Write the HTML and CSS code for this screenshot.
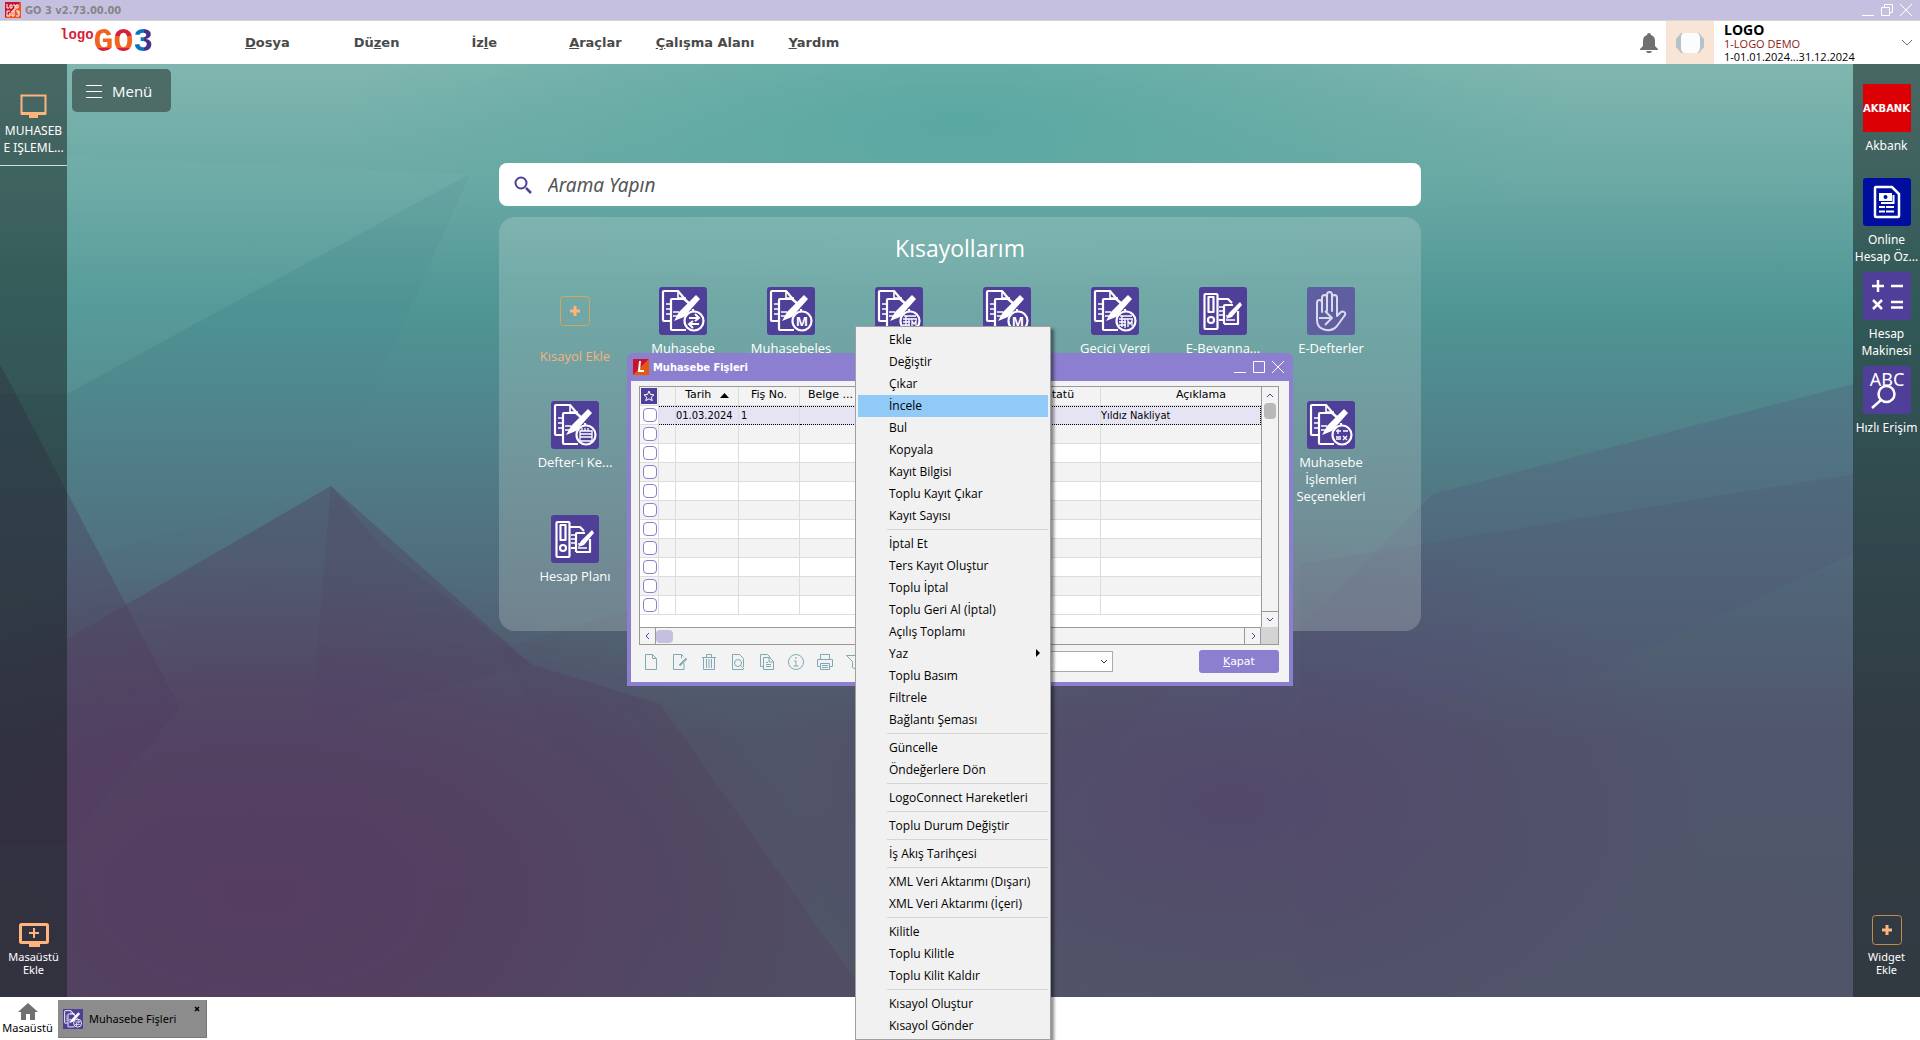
FILE: index.html
```
<!DOCTYPE html>
<html lang="tr">
	<head>
		<meta charset="UTF-8">
		<title>GO 3 v2.73.00.00</title>
		<link rel="stylesheet" href="styles.css">
	</head>
	<body>
		<!--ikonlar-->
		<svg class="sprite" aria-hidden="true">
			<symbol id="i-docs" viewBox="0 0 48 48">
				<g fill="none" stroke="#fff" stroke-width="2.200" stroke-linejoin="round">
					<path d="M11 34H5a1 1 0 0 1-1-1V5a1 1 0 0 1 1-1h14l6 7"/>
					<path d="M19 4v7h8M7 17h4M7 22h4M7 27h4M14 25h6M14 29h5" stroke-width="1.600"/>
					<path d="M27 43H13a1 1 0 0 1-1-1V13a1 1 0 0 1 1-1h14M34 22v4"/>
				</g>
				<path d="M37 8l4 4-16 18-10 4 5-9z" fill="#fff"/>
				<path d="M24 11l8 7" stroke="#fff" stroke-width="2.500"/>
				<circle cx="35" cy="34" r="9.500" fill="#4f3f99" stroke="#fff" stroke-width="2.200"/>
			</symbol>
			<symbol id="i-binder" viewBox="0 0 48 48">
				<g fill="none" stroke="#fff" stroke-width="2.200" stroke-linejoin="round">
					<rect x="5.500" y="7" width="13" height="35" rx="1"/>
					<rect x="9.500" y="10" width="5" height="15"/>
					<circle cx="12" cy="33" r="3"/>
					<path d="M19 12h10l4 4M20 33h4M25 37V19a1 1 0 0 1 1-1h8M39 24v13H25"/>
					<path d="M20 20h4M20 24h4M20 28h4M27 29h5M27 33h9" stroke-width="1.500"/>
				</g>
				<path d="M41 15l2 3-10 12-6 2 3-6z" fill="#fff"/>
			</symbol>
			<symbol id="i-swap" viewBox="0 0 48 48">
				<path d="M30 31h9m-3-4l4 4-4 3M40 37h-9m3-3l-4 3 4 4" fill="none" stroke="#fff" stroke-width="2"/>
			</symbol>
			<symbol id="i-form" viewBox="0 0 48 48">
				<path d="M29 29h12M28 32h14M28 35h7M28 38h7M31 29v11M34 32v9M37 40v-6l2 3 2-3v5" fill="none" stroke="#fff" stroke-width="1.300"/>
			</symbol>
			<symbol id="i-cal" viewBox="0 0 48 48">
				<path d="M29 30h12v10H29zM29 33h12M29 36h12M31 27v3M34 27v3M37 27v3" fill="none" stroke="#fff" stroke-width="1.300"/>
			</symbol>
			<symbol id="i-calc" viewBox="0 0 48 48">
				<path d="M29 30h5M31 28v5M36 30h5M29 36h5M29 38h5M36 35l4 4M40 35l-4 4" fill="none" stroke="#fff" stroke-width="1.300"/>
			</symbol>
			<symbol id="i-monitor" viewBox="0 0 32 28">
				<rect x="3.500" y="3.500" width="24" height="18" fill="none" stroke="#ffb47c" stroke-width="2"/>
				<path d="M3 20h25v3h-8v3h-9v-3H3z" fill="#ffb47c"/>
			</symbol>
		</svg>

		<div class="titlebar">
			<svg class="app-icon" viewBox="0 0 16 16">
				<path d="M0 0h16L0 16z" fill="#c8152c"/><path d="M16 0v16H0z" fill="#f4511e"/>
				<path d="M2 2v4h2M5 3h2v3H5zM8 3h2v5H8M11 3h2v3h-2zM5 9H2v5h3v-3M7 9h2v5H7zM11 9h3v5h-3M12 11h2" fill="none" stroke="#fff"/>
			</svg>
			<span class="app-title">GO 3 v2.73.00.00</span>
			<div class="win-btns">
				<button type="button" aria-label="Simge durumuna küçült"><svg viewBox="0 0 14 14"><path d="M1 12.500h12"/></svg></button>
				<button type="button" aria-label="Önceki boyut"><svg viewBox="0 0 14 14"><path d="M1.500 4.500h8v8h-8zM4.500 4.500v-3h8v8h-3"/></svg></button>
				<button type="button" aria-label="Kapat"><svg viewBox="0 0 14 14"><path d="M1 1l12 12M13 1L1 13"/></svg></button>
			</div>
		</div>

		<header class="header">
			<div class="logo">
				<span class="logo-small">logo</span><span class="logo-g">G</span><span class="logo-o">O</span><span class="logo-3">3</span>
			</div>
			<nav class="main-menu">
				<a href="#"><u>D</u>osya</a>
				<a href="#">Dü<u>z</u>en</a>
				<a href="#">İz<u>l</u>e</a>
				<a href="#"><u>A</u>raçlar</a>
				<a href="#"><u>Ç</u>alışma Alanı</a>
				<a href="#"><u>Y</u>ardım</a>
			</nav>
			<button type="button" class="bell" aria-label="Bildirimler">
				<svg viewBox="0 0 18 20"><path d="M9 0a2 2 0 0 1 2 2c3 1 4 3 4 6v5l3 3v1H0v-1l3-3V8c0-3 1-5 4-6a2 2 0 0 1 2-2zM6 18h6c-1 3-5 3-6 0z" fill="#707070"/></svg>
			</button>
			<div class="avatar">
				<svg viewBox="0 0 28 20"><path d="M5 0h18l5 6v8l-5 6H5l-5-6V6z" fill="#b5c2c8"/><path d="M7 0h14q3 1 3 5v10q-1 5-4 5H9q-4 0-4-5V5q0-4 2-5z" fill="#fbfcfc"/></svg>
			</div>
			<div class="account">
				<strong>LOGO</strong>
				<span class="firm">1-LOGO DEMO</span>
				<span>1-01.01.2024...31.12.2024</span>
			</div>
			<button type="button" class="account-more" aria-label="Hesap">
				<svg viewBox="0 0 12 8"><path d="M1 1l5 5 5-5" fill="none" stroke="#707070"/></svg>
			</button>
		</header>

		<div class="desktop">
			<svg class="wallpaper" viewBox="0 0 1920 933" preserveAspectRatio="none" aria-hidden="true">
				<defs>
					<linearGradient id="base" x1="0" y1="0" x2="0" y2="1">
						<stop offset="0" stop-color="#80b6af"/>
						<stop offset=".12" stop-color="#6caaa5"/>
						<stop offset=".26" stop-color="#4f9695"/>
						<stop offset=".4" stop-color="#518189"/>
						<stop offset=".55" stop-color="#506c7b"/>
						<stop offset=".72" stop-color="#50586c"/>
						<stop offset="1" stop-color="#505768"/>
					</linearGradient>
					<radialGradient id="plum"><stop offset="0" stop-color="#56375f"/><stop offset=".5" stop-color="#56375f" stop-opacity=".7"/><stop offset="1" stop-color="#56375f" stop-opacity="0"/></radialGradient>
					<radialGradient id="violet"><stop offset="0" stop-color="#54446a"/><stop offset="1" stop-color="#54446a" stop-opacity="0"/></radialGradient>
					<radialGradient id="teal"><stop offset="0" stop-color="#5aa8a2"/><stop offset="1" stop-color="#5aa8a2" stop-opacity="0"/></radialGradient>
				</defs>
				<rect width="1920" height="933" fill="url(#base)"/>
				<ellipse cx="960" cy="60" rx="620" ry="170" fill="url(#teal)"/>
				<path d="M0 90L470 110 67 330H0z" fill="#7fbab3" opacity=".15"/>
				<path d="M470 110L330 422 67 500V330z" fill="#4c8488" opacity=".12"/>
				<path d="M0 300l180 344L67 780H0z" fill="#4c3f60" opacity=".4"/>
				<path d="M331 422L67 575v358h800L660 640 530 600z" fill="#4f4462" opacity=".45"/>
				<path d="M331 422l50 60 150 118-220 60z" fill="#4e4b66" opacity=".35"/>
				<path d="M500 585l400-120 300 130-330 338H700z" fill="#50475f" opacity=".15"/>
				<path d="M1853 320l-420 110-240 240 400-60 260-120z" fill="#54597a" opacity=".3"/>
				<path d="M1300 500l553-90v523h-553z" fill="#525070" opacity=".2"/>
				<ellipse cx="260" cy="830" rx="560" ry="330" fill="url(#plum)" opacity=".75"/>
				<ellipse cx="1230" cy="740" rx="480" ry="280" fill="url(#violet)" opacity=".75"/>
			</svg>

			<aside class="side side-left">
				<button type="button" class="side-item side-current">
					<svg class="i-monitor"><use href="#i-monitor"/></svg>
					<span>MUHASEB<br>E IŞLEML...</span>
				</button>
				<button type="button" class="side-item side-add">
					<svg class="i-monitor i-monitor-add" viewBox="0 0 32 26"><rect x="2.500" y="2.500" width="27" height="18" rx="1" fill="none" stroke="#ffb47c" stroke-width="3"/><path d="M11 21h11v4H11zM15 6h2v4h4v2h-4v4h-2v-4h-4v-2h4z" fill="#ffb47c"/></svg>
					<span>Masaüstü<br>Ekle</span>
				</button>
			</aside>

			<main class="stage">
				<button type="button" class="menu-btn">
					<svg viewBox="0 0 16 14"><path d="M0 1.500h16M0 7.500h16M0 13.500h16" stroke="#fff"/></svg>
					Menü
				</button>

				<label class="search">
					<svg viewBox="0 0 18 18"><path d="M12 12l5 5" stroke="#4f3f99" stroke-width="2.500"/><circle cx="7" cy="7" r="5.500" fill="none" stroke="#4f3f99" stroke-width="2"/></svg>
					<input type="text" placeholder="Arama Yapın" aria-label="Arama Yapın">
				</label>

				<section class="shortcuts">
					<h1>Kısayollarım</h1>
					<div class="grid">
						<a href="#" class="cell add">
							<svg viewBox="0 0 30 30"><rect x=".5" y=".5" width="29" height="29" rx="3" fill="none" stroke="#d3a55e"/><path d="M13.500 10h3v3.500H20v3h-3.500V20h-3v-3.500H10v-3h3.500z" fill="#ffb47c"/></svg>
							<span>Kısayol Ekle</span>
						</a>
						<a href="#" class="cell"><svg class="tile"><use href="#i-docs"/><use href="#i-swap"/></svg><span>Muhasebe</span></a>
						<a href="#" class="cell"><svg class="tile"><use href="#i-docs"/><text x="35" y="39" class="badge-m">M</text></svg><span>Muhasebeles</span></a>
						<a href="#" class="cell" aria-label="Kısayol"><svg class="tile"><use href="#i-docs"/><use href="#i-form"/></svg></a>
						<a href="#" class="cell" aria-label="Kısayol"><svg class="tile"><use href="#i-docs"/><text x="35" y="39" class="badge-m">M</text></svg></a>
						<a href="#" class="cell"><svg class="tile"><use href="#i-docs"/><use href="#i-form"/></svg><span>Geçici Vergi</span></a>
						<a href="#" class="cell"><svg class="tile"><use href="#i-binder"/></svg><span>E-Beyanna...</span></a>
						<a href="#" class="cell">
							<svg class="tile dim" viewBox="0 0 48 48"><path d="M10 33V16c0-4 5-4 5 0v9V11c0-4 5-4 5 0v13V8c0-4 5-4 5 0v16V11c0-4 5-4 5 0v18l4-4c2-1 5 0 4 3l-8 11c-6 7-20 5-20-6zM12 31h12M18 24l7 7-7 7" fill="none" stroke="#dcd9ee" stroke-width="2" stroke-linejoin="round"/></svg>
							<span>E-Defterler</span>
						</a>
						<a href="#" class="cell"><svg class="tile"><use href="#i-docs"/><use href="#i-cal"/></svg><span>Defter-i Ke...</span></a>
						<a href="#" class="cell last-col"><svg class="tile"><use href="#i-docs"/><use href="#i-calc"/></svg><span>Muhasebe<br>İşlemleri<br>Seçenekleri</span></a>
						<a href="#" class="cell"><svg class="tile"><use href="#i-binder"/></svg><span>Hesap Planı</span></a>
					</div>
				</section>
			</main>

			<aside class="side side-right">
				<button type="button" class="side-item">
					<span class="tile akbank"><b>AKBANK</b></span>
					<span>Akbank</span>
				</button>
				<button type="button" class="side-item">
					<svg class="tile tile-blue" viewBox="0 0 48 48"><path d="M13 9h16l7 7v22a1 1 0 0 1-1 1H13a1 1 0 0 1-1-1V10a1 1 0 0 1 1-1z" fill="none" stroke="#fff" stroke-width="2.500"/><path d="M16 15h13v8H16z" fill="#fff"/><circle cx="22.500" cy="19" r="2" fill="#000ea0"/><path d="M30.500 17v8H18M16 29h6M16 33.500h6M23 29h8M23 33.500h8" fill="none" stroke="#fff" stroke-width="2"/></svg>
					<span>Online<br>Hesap Öz...</span>
				</button>
				<button type="button" class="side-item">
					<svg class="tile" viewBox="0 0 48 48"><path d="M9 14h12M15 8v12M28 14h12M10 28l9 9M19 28l-9 9M28 30h12M28 35.500h12" stroke="#fff" stroke-width="2.500"/></svg>
					<span>Hesap<br>Makinesi</span>
				</button>
				<button type="button" class="side-item">
					<svg class="tile" viewBox="0 0 48 48"><text x="24" y="20" class="abc">ABC</text><circle cx="23.500" cy="28" r="8" fill="none" stroke="#fff" stroke-width="2.500"/><path d="M18 34l-9 8" stroke="#fff" stroke-width="2.500"/></svg>
					<span>Hızlı Erişim</span>
				</button>
				<button type="button" class="side-item side-add">
					<svg class="box-add" viewBox="0 0 30 30"><rect x=".5" y=".5" width="29" height="29" rx="3" fill="none" stroke="#c08e48"/><path d="M13.500 10h3v3.500H20v3h-3.500V20h-3v-3.500H10v-3h3.500z" fill="#ffb47c"/></svg>
					<span>Widget<br>Ekle</span>
				</button>
			</aside>
		</div>

		<footer class="taskbar">
			<a href="#" class="home">
				<svg viewBox="0 0 20 17"><path d="M10 0l10 9h-3v8h-5v-6H8v6H3V9H0z" fill="#707070"/></svg>
				Masaüstü
			</a>
			<div class="task">
				<svg class="tile"><use href="#i-docs"/><use href="#i-swap"/></svg>
				<span>Muhasebe Fişleri</span>
				<button type="button" aria-label="Sekmeyi kapat"><svg viewBox="0 0 6 6"><path d="M1 1l4 4M5 1L1 5" stroke="#000" stroke-width="1.500"/></svg></button>
			</div>
		</footer>

		<!--Muhasebe Fişleri penceresi-->
		<div class="window">
			<div class="window-head">
				<svg class="app-icon" viewBox="0 0 16 16"><path d="M0 0h16L0 16z" fill="#c8152c"/><path d="M16 0v16H0z" fill="#e8570f"/><path d="M7 2L6 12h5" fill="none" stroke="#fff" stroke-width="2"/></svg>
				<h2>Muhasebe Fişleri</h2>
				<div class="win-btns">
					<button type="button" aria-label="Simge durumuna küçült"><svg viewBox="0 0 14 14"><path d="M1 12.500h12"/></svg></button>
					<button type="button" aria-label="Ekranı kapla"><svg viewBox="0 0 14 14"><path d="M1.500 1.500h11v11h-11z"/></svg></button>
					<button type="button" aria-label="Kapat"><svg viewBox="0 0 14 14"><path d="M1 1l12 12M13 1L1 13"/></svg></button>
				</div>
			</div>
			<div class="window-body">
				<div class="list">
					<div class="list-main">
						<table>
							<colgroup><col class="c-check"><col class="c-mark"><col class="c-date"><col class="c-no"><col class="c-doc"><col><col class="c-state"><col class="c-desc"></colgroup>
							<thead>
								<tr>
									<th><svg class="star" viewBox="0 0 16 16"><path d="M8 3l1.500 3.500 3.500.3-2.700 2.300.9 3.600L8 10.800l-3.200 1.900.9-3.600L3 6.800l3.500-.3z" fill="none" stroke="#fff"/></svg></th>
									<th></th>
									<th>Tarih <svg class="sort" viewBox="0 0 9 5"><path d="M0 5L4.500 0 9 5z"/></svg></th>
									<th>Fiş No.</th>
									<th>Belge ...</th>
									<th></th>
									<th>Statü</th>
									<th>Açıklama</th>
								</tr>
							</thead>
							<tbody>
								<tr class="selected"><td><input type="checkbox" aria-label="Satır 1"></td><td></td><td>01.03.2024</td><td>1</td><td></td><td></td><td></td><td>Yıldız Nakliyat</td></tr>
								<tr><td><input type="checkbox" aria-label="Satır 2"></td><td></td><td></td><td></td><td></td><td></td><td></td><td></td></tr>
								<tr><td><input type="checkbox" aria-label="Satır 3"></td><td></td><td></td><td></td><td></td><td></td><td></td><td></td></tr>
								<tr><td><input type="checkbox" aria-label="Satır 4"></td><td></td><td></td><td></td><td></td><td></td><td></td><td></td></tr>
								<tr><td><input type="checkbox" aria-label="Satır 5"></td><td></td><td></td><td></td><td></td><td></td><td></td><td></td></tr>
								<tr><td><input type="checkbox" aria-label="Satır 6"></td><td></td><td></td><td></td><td></td><td></td><td></td><td></td></tr>
								<tr><td><input type="checkbox" aria-label="Satır 7"></td><td></td><td></td><td></td><td></td><td></td><td></td><td></td></tr>
								<tr><td><input type="checkbox" aria-label="Satır 8"></td><td></td><td></td><td></td><td></td><td></td><td></td><td></td></tr>
								<tr><td><input type="checkbox" aria-label="Satır 9"></td><td></td><td></td><td></td><td></td><td></td><td></td><td></td></tr>
								<tr><td><input type="checkbox" aria-label="Satır 10"></td><td></td><td></td><td></td><td></td><td></td><td></td><td></td></tr>
								<tr><td><input type="checkbox" aria-label="Satır 11"></td><td></td><td></td><td></td><td></td><td></td><td></td><td></td></tr>
							</tbody>
						</table>
					</div>
					<div class="scroll-v">
						<button type="button" aria-label="Yukarı"><svg viewBox="0 0 8 8"><path d="M1 6l3-3 3 3"/></svg></button>
						<span class="thumb"></span>
						<button type="button" aria-label="Aşağı"><svg viewBox="0 0 8 8"><path d="M1 2l3 3 3-3"/></svg></button>
					</div>
					<div class="scroll-h">
						<button type="button" aria-label="Sola"><svg viewBox="0 0 8 8"><path d="M5 1L2 4l3 3"/></svg></button>
						<span class="thumb"></span>
						<button type="button" aria-label="Sağa"><svg viewBox="0 0 8 8"><path d="M3 1l3 3-3 3"/></svg></button>
					</div>
				</div>
				<div class="tools">
					<button type="button" aria-label="Ekle"><svg viewBox="0 0 16 16"><path d="M2.500.5h7l4 4v11h-11zM9.500.5v4h4"/></svg></button>
					<button type="button" aria-label="Değiştir"><svg viewBox="0 0 16 16"><path d="M12 9v6.500H1.500V.5h8l2 2M9.500.5v4"/><path d="M14.500 4.500l-7 7" stroke-width="2"/></svg></button>
					<button type="button" aria-label="Çıkar"><svg viewBox="0 0 16 16"><path d="M1 3.500h14M5.500 3V.5h5V3M2.500 4v11.500h11V4M5.500 5v9M8 5v9M10.500 5v9"/></svg></button>
					<button type="button" aria-label="İncele"><svg viewBox="0 0 16 16"><path d="M13.500 13V4.500l-4-4h-7v15h11M10 11l4 4"/><circle cx="8" cy="9" r="3.500"/></svg></button>
					<button type="button" aria-label="Kopyala"><svg viewBox="0 0 16 16"><path d="M4 12.500H1.500V.5h7l3 3M4.500 3.500h6l4 4v8h-10zM10 4v4h4M7 8.500h2M7 10.500h5M7 12.500h5"/></svg></button>
					<button type="button" aria-label="Kayıt Bilgisi"><svg viewBox="0 0 16 16"><circle cx="8" cy="8" r="7.500"/><path d="M8 3v2M6 7h2v5M5.500 12h5"/></svg></button>
					<button type="button" aria-label="Yaz"><svg viewBox="0 0 16 16"><path d="M3.500 5V.5h9V5M3 12.500H.5v-7h15v7H13M3.500 9.500h9v6h-9zM5 11.500h6M5 13.500h6"/></svg></button>
					<button type="button" aria-label="Filtrele"><svg viewBox="0 0 16 16"><path d="M.5 1.500h15l-5 6v8l-4-2v-6z"/></svg></button>
					<span class="combo">
						<select aria-label="Görünüm"><option></option></select>
						<svg viewBox="0 0 8 8"><path d="M1 2l3 3 3-3"/></svg>
					</span>
					<button type="button" class="close-btn"><u>K</u>apat</button>
				</div>
			</div>
		</div>

		<!--sağ tık menüsü-->
		<ul class="context-menu">
			<li><button type="button">Ekle</button></li>
			<li><button type="button">Değiştir</button></li>
			<li><button type="button">Çıkar</button></li>
			<li class="active"><button type="button">İncele</button></li>
			<li><button type="button">Bul</button></li>
			<li><button type="button">Kopyala</button></li>
			<li><button type="button">Kayıt Bilgisi</button></li>
			<li><button type="button">Toplu Kayıt Çıkar</button></li>
			<li><button type="button">Kayıt Sayısı</button></li>
			<li class="sep"></li>
			<li><button type="button">İptal Et</button></li>
			<li><button type="button">Ters Kayıt Oluştur</button></li>
			<li><button type="button">Toplu İptal</button></li>
			<li><button type="button">Toplu Geri Al (İptal)</button></li>
			<li><button type="button">Açılış Toplamı</button></li>
			<li><button type="button">Yaz <svg viewBox="0 0 4 8"><path d="M0 0l4 4-4 4z"/></svg></button></li>
			<li><button type="button">Toplu Basım</button></li>
			<li><button type="button">Filtrele</button></li>
			<li><button type="button">Bağlantı Şeması</button></li>
			<li class="sep"></li>
			<li><button type="button">Güncelle</button></li>
			<li><button type="button">Öndeğerlere Dön</button></li>
			<li class="sep"></li>
			<li><button type="button">LogoConnect Hareketleri</button></li>
			<li class="sep"></li>
			<li><button type="button">Toplu Durum Değiştir</button></li>
			<li class="sep"></li>
			<li><button type="button">İş Akış Tarihçesi</button></li>
			<li class="sep"></li>
			<li><button type="button">XML Veri Aktarımı (Dışarı)</button></li>
			<li><button type="button">XML Veri Aktarımı (İçeri)</button></li>
			<li class="sep"></li>
			<li><button type="button">Kilitle</button></li>
			<li><button type="button">Toplu Kilitle</button></li>
			<li><button type="button">Toplu Kilit Kaldır</button></li>
			<li class="sep"></li>
			<li><button type="button">Kısayol Oluştur</button></li>
			<li><button type="button">Kısayol Gönder</button></li>
		</ul>
	</body>
</html>
```
FILE: styles.css
```
*{
	padding: 0;
	margin: 0;
	box-sizing: border-box;
}
body{
	display: flex;
	flex-direction: column;
	height: 100vh;
	overflow: hidden;
	position: relative;
	background-color: #fff;
	font-family: "Open Sans", "Noto Sans", sans-serif;
	font-size: 12px;
}
a{
	color: inherit;
	text-decoration: none;
}
ul{
	list-style: none;
}
svg{
	display: block;
}
button{
	border: none;
	background: none;
	color: inherit;
	font: inherit;
}
.sprite{
	position: absolute;
	width: 0;
	height: 0;
}

/* başlık çubuğu */
.titlebar{
	display: flex;
	align-items: center;
	height: 21px;
	flex: none;
	padding: 0 7px 0 5px;
	border-bottom: 1px solid #d9d6d2;
	background-color: #c5c0df;
}
.app-icon{
	width: 16px;
	height: 16px;
}
.app-title{
	margin-left: 4px;
	color: #858585;
	font: bold 11px "DejaVu Sans Condensed", "DejaVu Sans", sans-serif;
}
.win-btns{
	display: flex;
	gap: 5px;
	margin-left: auto;
}
.win-btns svg{
	width: 14px;
	height: 14px;
	fill: none;
	stroke: #fff;
}

/* üst menü */
.header{
	display: flex;
	align-items: center;
	height: 43px;
	flex: none;
	padding-right: 7px;
}
.logo{
	display: flex;
	width: 245px;
	padding-left: 60px;
	font: bold 33px/36px "Liberation Mono", monospace;
}
.logo span{
	color: transparent;
	-webkit-background-clip: text;
	background-clip: text;
}
.logo .logo-small{
	color: #d61f3c;
	font-size: 14px;
	line-height: 20px;
}
.logo-g{
	background-image: linear-gradient(#f26322 65%, #d61f3c 65%);
}
.logo-o{
	background-image: linear-gradient(#d61f3c 30%, #f26322 30%, #f26322 65%, #d61f3c 65%);
}
.logo-3{
	background-image: linear-gradient(90deg, #0e72b8 55%, #46308c 55%);
}
.main-menu{
	display: flex;
	flex: 1;
	color: #4a4a4a;
	font: bold 13px "DejaVu Sans", sans-serif;
}
.main-menu a{
	margin-right: 34px;
}
.main-menu a:first-child{
	margin-right: 64px;
}
.main-menu a:nth-child(2),
.main-menu a:nth-child(3){
	margin-right: 72px;
}
.bell svg{
	width: 18px;
	height: 20px;
}
.avatar{
	display: flex;
	align-items: center;
	justify-content: center;
	width: 48px;
	height: 43px;
	margin: 0 10px 0 8px;
	background-color: #f8e5d6;
}
.avatar svg{
	width: 28px;
	height: 20px;
}
.account{
	display: flex;
	flex-direction: column;
	width: 177px;
	font-size: 11px;
	line-height: 13px;
}
.account strong{
	font-size: 14px;
	line-height: 15px;
}
.account .firm{
	color: #8b1a10;
}
.account-more svg{
	width: 12px;
	height: 8px;
}

/* masaüstü */
.desktop{
	display: flex;
	flex: 1;
	position: relative;
	min-height: 0;
	color: #fff;
}
.wallpaper{
	position: absolute;
	width: 100%;
	height: 100%;
}
.side{
	display: flex;
	flex-direction: column;
	position: relative;
	width: 67px;
	flex: none;
	padding-bottom: 21px;
	background-color: rgba(22,32,30,0.52);
	font-family: "Noto Sans", "Open Sans", sans-serif;
}
.side-item{
	display: flex;
	flex-direction: column;
	align-items: center;
	line-height: 17px;
	white-space: nowrap;
}
.side-current{
	height: 102px;
	padding-top: 28px;
	border-bottom: 1px solid #d5dcdb;
}
.i-monitor{
	width: 32px;
	height: 28px;
	margin-bottom: 2px;
}
.i-monitor-add{
	height: 26px;
}
.side-add{
	margin-top: auto;
	font-size: 11px;
	line-height: 13px;
}
.side-right{
	padding-top: 20px;
}
.side-right .side-item{
	height: 94px;
	gap: 5px;
}
.side-right .side-add{
	height: auto;
}
.box-add{
	width: 30px;
	height: 30px;
}
.tile{
	width: 48px;
	height: 48px;
	flex: none;
	border-radius: 3px;
	background-color: #4f3f99;
}
.tile-blue{
	background-color: #000ea0;
}
.akbank{
	display: flex;
	align-items: center;
	justify-content: center;
	border-radius: 0;
	background-color: #dc0005;
	font: bold 10px "DejaVu Sans", sans-serif;
}
.dim{
	background-color: #5e5ea0;
}
.badge-m{
	fill: #fff;
	font: bold 13px "Noto Sans", sans-serif;
	text-anchor: middle;
}
.abc{
	fill: #fff;
	font: 18px "Noto Sans", sans-serif;
	text-anchor: middle;
}
.stage{
	display: flex;
	flex-direction: column;
	flex: 1;
	align-items: center;
	position: relative;
	padding-top: 5px;
}
.menu-btn{
	display: flex;
	align-items: center;
	align-self: flex-start;
	gap: 10px;
	height: 43px;
	margin-left: 5px;
	padding: 0 19px 0 14px;
	border-radius: 5px;
	background-color: #4d6c68;
	font-size: 15px;
}
.menu-btn svg{
	width: 16px;
	height: 14px;
}
.search{
	display: flex;
	align-items: center;
	gap: 16px;
	width: 922px;
	max-width: 90%;
	height: 43px;
	margin-top: 51px;
	padding: 0 15px;
	border-radius: 8px;
	background-color: #fff;
}
.search svg{
	width: 18px;
	height: 18px;
}
.search input{
	flex: 1;
	border: none;
	outline: none;
	background: none;
	font: italic 19px "Noto Sans", sans-serif;
}
.search input::placeholder{
	color: #555;
}
.shortcuts{
	width: 922px;
	max-width: 90%;
	height: 414px;
	margin-top: 11px;
	padding: 14px 22px 0;
	border-radius: 16px;
	background-color: rgba(210,225,220,0.25);
}
.shortcuts h1{
	margin-bottom: 22px;
	font-size: 23px;
	font-weight: normal;
	line-height: 34px;
	text-align: center;
}
.grid{
	display: grid;
	grid-template-columns: repeat(8, 108px);
	grid-auto-rows: 114px;
}
.cell{
	display: flex;
	flex-direction: column;
	align-items: center;
	gap: 5px;
	font-size: 13px;
	line-height: 17px;
	text-align: center;
}
.add{
	gap: 22px;
	padding-top: 9px;
	color: #f3b380;
}
.add svg{
	width: 30px;
	height: 30px;
}
.last-col{
	grid-column: 8;
}

/* görev çubuğu */
.taskbar{
	display: flex;
	align-items: flex-start;
	gap: 5px;
	height: 43px;
	flex: none;
	padding: 3px 2px;
	font-family: "Noto Sans", "Open Sans", sans-serif;
	font-size: 11px;
}
.home{
	display: flex;
	flex-direction: column;
	align-items: center;
	width: 51px;
	padding-top: 3px;
}
.home svg{
	width: 20px;
	height: 17px;
}
.task{
	display: flex;
	align-items: center;
	width: 149px;
	height: 38px;
	padding-left: 5px;
	border-right: 1px solid #777;
	border-bottom: 1px solid #777;
	background-color: #8c8c8c;
}
.task .tile{
	width: 20px;
	height: 20px;
	margin-right: 6px;
	border-radius: 0;
}
.task span{
	flex: 1;
	white-space: nowrap;
}
.task button{
	align-self: flex-start;
	padding: 6px;
}
.task button svg{
	width: 6px;
	height: 6px;
}

/* pencere */
.window{
	position: absolute;
	left: 627px;
	top: 353px;
	width: 666px;
	padding: 0 4px 4px;
	border-radius: 6px 6px 0 0;
	background-color: #8d7fcf;
	font-family: "DejaVu Sans Condensed", "DejaVu Sans", sans-serif;
	font-size: 11px;
}
.window-head{
	display: flex;
	align-items: center;
	gap: 4px;
	height: 28px;
	padding: 0 4px 0 2px;
	color: #fff;
}
.window-head h2{
	font-size: 11px;
}
.window-body{
	padding: 5px 10px 9px 8px;
	background-color: #f3f3f3;
}
.list{
	display: grid;
	grid-template-columns: 1fr 17px;
	grid-template-rows: 240px 17px;
	border: 1px solid #999;
	background-color: #d4d4d4;
}
.list-main{
	overflow: hidden;
	background-color: #fff;
}
.list table{
	width: 100%;
	border-collapse: separate;
	border-spacing: 0;
	table-layout: fixed;
}
.c-check{ width: 19px; }
.c-mark{ width: 17px; }
.c-date{ width: 63px; }
.c-no{ width: 61px; }
.c-doc{ width: 62px; }
.c-state{ width: 82px; }
.c-desc{ width: 160px; }
.list th,
.list td{
	height: 19px;
	border-right: 1px solid #dcdcdc;
	border-bottom: 1px solid #dcdcdc;
	line-height: 16px;
	text-align: left;
	white-space: nowrap;
}
.list th:last-child,
.list td:last-child{
	border-right: none;
}
.list th{
	background-color: #f3f3f3;
	font-family: "DejaVu Sans", sans-serif;
	font-weight: normal;
	line-height: 15px;
	text-align: center;
	vertical-align: top;
}
.list th:last-child{
	padding-left: 40px;
}
.list td:nth-child(4){
	padding-left: 2px;
}
.list tbody tr:nth-child(even){
	background-color: #f3f3f3;
}
.list .selected td:nth-child(n+2){
	border-top: 1px dotted #000;
	border-bottom: 1px dotted #000;
	background-color: #e6e3f3;
}
.list .selected td:last-child{
	border-right: 1px dotted #000;
}
.star{
	width: 16px;
	height: 16px;
	margin: 1px 0 0 1px;
	background-color: #4f3f99;
}
.sort{
	display: inline-block;
	width: 9px;
	height: 5px;
	margin-left: 5px;
}
.list input{
	display: block;
	appearance: none;
	width: 14px;
	height: 14px;
	margin: 1px 0 1px 3px;
	border: 1px solid #8d7fcf;
	border-radius: 4px;
	background-color: #fff;
}
.scroll-v,
.scroll-h{
	display: flex;
	background-color: #f3f3f3;
}
.scroll-v{
	flex-direction: column;
	align-items: center;
	border-left: 1px solid #999;
}
.scroll-h{
	align-items: center;
	border-top: 1px solid #999;
	border-right: 1px solid #999;
}
.scroll-v button,
.scroll-h button{
	display: flex;
	align-items: center;
	justify-content: center;
	width: 16px;
	height: 16px;
	flex: none;
}
.scroll-v button:last-child{
	width: 100%;
	margin-top: auto;
	border-top: 1px solid #999;
}
.scroll-h button:first-child{
	border-right: 1px solid #999;
}
.scroll-h button:last-child{
	margin-left: auto;
	border-left: 1px solid #999;
}
.scroll-v svg,
.scroll-h svg,
.combo svg{
	width: 8px;
	height: 8px;
	fill: none;
	stroke: #4f3f99;
}
.scroll-v .thumb{
	width: 12px;
	height: 16px;
	border-radius: 4px;
	background-color: #b8b8b8;
}
.scroll-h .thumb{
	width: 17px;
	height: 13px;
	border-radius: 4px;
	background-color: #c5c0df;
}
.tools{
	display: flex;
	align-items: center;
	gap: 13px;
	margin-top: 5px;
	padding-left: 4px;
}
.tools svg{
	width: 16px;
	height: 16px;
	fill: none;
	stroke: #7fa9b5;
}
.combo{
	display: block;
	position: relative;
	width: 160px;
	margin-left: 78px;
}
.combo select{
	display: block;
	appearance: none;
	width: 100%;
	height: 21px;
	border: 1px solid #aaa;
	background-color: #fff;
}
.combo svg{
	position: absolute;
	right: 5px;
	top: 7px;
	width: 8px;
	height: 8px;
	stroke: #333;
}
.tools .close-btn{
	width: 80px;
	height: 23px;
	margin-left: auto;
	border-radius: 3px;
	background-color: #8d7fcf;
	color: #fff;
	font-family: "DejaVu Sans", sans-serif;
}

/* sağ tık menüsü */
.context-menu{
	position: absolute;
	left: 855px;
	top: 326px;
	width: 196px;
	padding: 2px;
	border: 1px solid #a0a0a0;
	background-color: #f1f1f1;
	box-shadow: 3px 3px 3px rgba(0,0,0,0.45);
}
.context-menu button{
	display: flex;
	align-items: center;
	justify-content: space-between;
	width: 100%;
	height: 22px;
	padding: 0 8px 2px 31px;
	white-space: nowrap;
}
.context-menu svg{
	width: 4px;
	height: 8px;
}
.context-menu .active{
	background-color: #91c9f7;
}
.context-menu .sep{
	height: 6px;
	margin-left: 29px;
	border-top: 2px solid #f1f1f1;
	background: linear-gradient(#d5d5d5 1px, #f1f1f1 1px);
	background-origin: padding-box;
}
```
